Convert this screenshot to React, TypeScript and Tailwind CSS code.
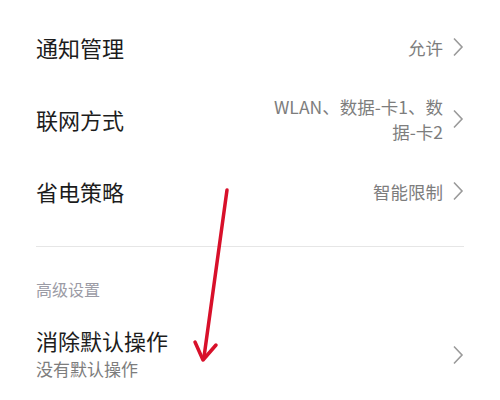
import React from "react";

function Chevron() {
  return (
    <svg width="12" height="20" viewBox="0 0 12 20" className="shrink-0">
      <path d="M2 1.5 L10 10 L2 18.5" fill="none" stroke="#9a9a9a" strokeWidth="1.6" />
    </svg>
  );
}

function Row({ title, value }: { title: string; value: React.ReactNode }) {
  return (
    <div className="h-[72px] flex items-center justify-between">
      <span className="text-[22px] text-[#1c1c1c]">{title}</span>
      <div className="flex items-center gap-[9px]">
        <span className="text-[17.5px] leading-[25px] text-[#7d7d7d] text-right">{value}</span>
        <Chevron />
      </div>
    </div>
  );
}

export default function App() {
  return (
    <div
      className="relative w-[500px] h-[400px] bg-white overflow-hidden px-[36px] pt-[11px]"
      style={{ fontFamily: '"Noto Sans CJK SC", "Noto Sans", sans-serif' }}
    >
      <Row title="通知管理" value="允许" />
      <Row
        title="联网方式"
        value={
          <>
            WLAN、数据-卡1、数
            <br />
            据-卡2
          </>
        }
      />
      <Row title="省电策略" value="智能限制" />

      <div className="mt-[19px] h-px bg-[#e6e6e6]" />

      <div className="mt-[32px] text-[16px] leading-[20px] text-[#9b9ba5]">高级设置</div>

      <div className="mt-[27px] flex items-center justify-between">
        <div className="flex flex-col">
          <span className="text-[22px] leading-[28px] text-[#1c1c1c]">消除默认操作</span>
          <span className="text-[17px] leading-[30px] text-[#7d7d7d]">没有默认操作</span>
        </div>
        <Chevron />
      </div>

      {/* red annotation arrow */}
      <svg className="absolute left-0 top-0 pointer-events-none" width="500" height="400">
        <g stroke="#d8102a" strokeWidth="3.5" strokeLinecap="round" strokeLinejoin="round" fill="none">
          <path d="M227 190 L204 357" />
          <path d="M195 342 L203 360 L216 345" />
        </g>
      </svg>
    </div>
  );
}
